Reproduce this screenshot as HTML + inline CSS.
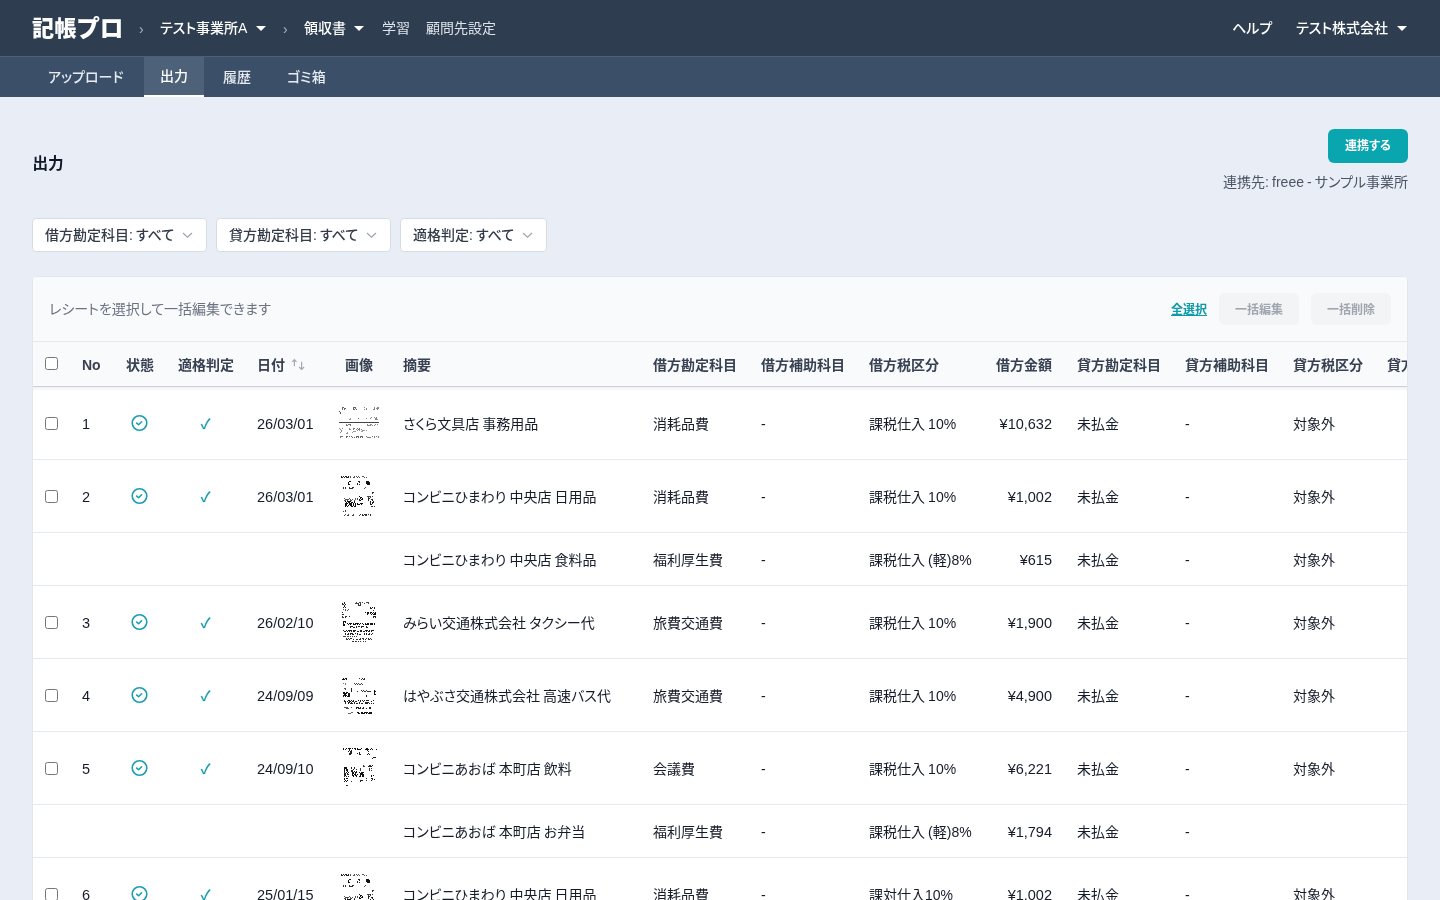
<!DOCTYPE html>
<html lang="ja">
<head>
<meta charset="utf-8">
<title>記帳プロ - 出力</title>
<style>
*{box-sizing:border-box;margin:0;padding:0}
html,body{width:1440px;height:900px;overflow:hidden}
body{font-family:"Liberation Sans","Noto Sans CJK JP",sans-serif;font-feature-settings:"palt" 1;word-spacing:-0.8px;font-size:14px;color:#1f2937;background:#e9eef6;position:relative}
a{color:inherit;text-decoration:none}
#app{position:absolute;left:0;top:0;width:1440px;height:900px;overflow:hidden;will-change:transform}
/* top nav */
.topnav{position:absolute;left:0;top:0;width:1440px;height:56px;background:#2e3e50;color:#fff}
.topnav .it{position:absolute;top:0;height:56px;line-height:57px;font-size:14px;font-weight:500;white-space:nowrap}
.logo{position:absolute;left:32px;top:0;height:56px;line-height:56px;font-size:22px;font-weight:900;letter-spacing:0.4px;font-feature-settings:normal;white-space:nowrap}
.topnav .dim{font-weight:400;color:#dde3ea}
.sep{color:#aab4c0;font-size:14px;font-weight:400!important;line-height:59px!important}
.caret{position:absolute;width:0;height:0;border-left:5px solid transparent;border-right:5px solid transparent;border-top:5px solid #fff;top:26px}
/* sub nav */
.subnav{position:absolute;left:0;top:56px;width:1440px;height:41px;background:#3b5068;border-top:1px solid #4b5f77;color:#e6ebf1}
.subnav .tab{position:absolute;top:0;height:40px;line-height:40px;font-size:14px;font-weight:500;white-space:nowrap}
.subnav .act{left:144px;width:60px;text-align:center;background:#4d6279;color:#fff;font-weight:500;border-bottom:2px solid #fff;line-height:38px}
/* page head */
h1{position:absolute;left:32.5px;top:152px;font-size:15.6px;line-height:24px;font-weight:700;color:#111827}
.btn{position:absolute;left:1328px;top:129px;width:80px;height:34px;border-radius:6px;background:#0aa6b0;color:#fff;font-size:12px;font-weight:700;text-align:center;line-height:35.5px}
.dest{position:absolute;right:32px;top:171px;font-size:14px;line-height:22px;color:#4b5563;white-space:nowrap}
.flt{position:absolute;top:218px;height:34px;border:1px solid #d6dce5;border-radius:4px;background:#fff;font-size:14px;line-height:32px;padding-left:12px;color:#333b49;font-weight:500;white-space:nowrap}
.flt svg{position:absolute;right:13px;top:11px}
/* card */
.card{position:absolute;left:32px;top:276px;width:1376px;height:640px;background:#fff;border:1px solid #e2e7ee;border-radius:4px 4px 0 0;overflow:hidden}
.tool{position:absolute;left:0;top:0;width:1374px;height:65px;background:#f9fafc;border-bottom:1px solid #e5e9ef}
.tool .hint{position:absolute;left:16px;top:21px;line-height:22px;font-size:14px;color:#6b7280}
.tool .all{position:absolute;left:1138px;top:22px;line-height:22px;font-size:12px;font-weight:700;color:#0e9aa7;text-decoration:underline}
.tool .gb{position:absolute;top:16px;height:32px;width:80px;border-radius:6px;background:#f3f4f6;color:#a0a6b0;font-size:12px;font-weight:700;text-align:center;line-height:34px}
table{position:absolute;left:0;top:65px;border-collapse:separate;border-spacing:0;table-layout:fixed;width:1460px}
th,td{padding:0 12px;text-align:left;white-space:nowrap;overflow:visible;font-size:14px;vertical-align:middle}
th{height:45px;background:#f9fafc;font-weight:700;color:#374151;border-bottom:1px solid #cdd0d4}
.hsh{position:absolute;left:0;top:110px;width:1374px;height:4px;background:linear-gradient(rgba(0,0,0,.06),rgba(0,0,0,0));z-index:3}
th .cb{position:relative;top:-1px}
td{height:73px;border-bottom:1px solid #e6e9ee;color:#151b29;background:#fff}
tr.sub td{height:53px}
.r{text-align:right}
td.r,th.r{padding-right:13px}
.hy{position:relative;top:1px}
.c{text-align:center}
.cb{display:block;width:13px;height:13px;border:1px solid #767676;border-radius:2.5px;background:#fff}
.ico{display:block;margin:0 auto;position:relative;left:-1px}
.sort{position:relative;left:4.5px;top:-0.5px;overflow:visible}
.th{display:block;margin-left:-16px}
.n{font-size:14.5px;position:relative;top:1px}
.chk{color:#1a9db0;font-size:14px;font-weight:700}
</style>
</head>
<body>
<div id="app">

<div class="topnav">
  <div class="logo">記帳<span style="font-size:23.6px;letter-spacing:0;margin-left:-0.6px;position:relative;top:1px">プロ</span></div>
  <div class="it sep" style="left:139px">›</div>
  <div class="it" style="left:160px">テスト事業所A</div>
  <div class="caret" style="left:256px"></div>
  <div class="it sep" style="left:283px">›</div>
  <div class="it" style="left:304px">領収書</div>
  <div class="caret" style="left:354px"></div>
  <div class="it dim" style="left:382px">学習</div>
  <div class="it dim" style="left:426px">顧問先設定</div>
  <div class="it" style="left:1232px">ヘルプ</div>
  <div class="it" style="left:1296px">テスト株式会社</div>
  <div class="caret" style="left:1397px"></div>
</div>

<div class="subnav">
  <div class="tab" style="left:48px">アップロード</div>
  <div class="tab act">出力</div>
  <div class="tab" style="left:223px">履歴</div>
  <div class="tab" style="left:287px">ゴミ箱</div>
</div>

<h1>出力</h1>
<div class="btn">連携する</div>
<div class="dest">連携先: freee - サンプル事業所</div>

<div class="flt" style="left:32px;width:175px">借方勘定科目: すべて<svg width="11" height="10" viewBox="0 0 11 10"><path d="M1 3l4.5 4.2L10 3" fill="none" stroke="#9ca3af" stroke-width="1.2"/></svg></div>
<div class="flt" style="left:216px;width:175px">貸方勘定科目: すべて<svg width="11" height="10" viewBox="0 0 11 10"><path d="M1 3l4.5 4.2L10 3" fill="none" stroke="#9ca3af" stroke-width="1.2"/></svg></div>
<div class="flt" style="left:400px;width:147px">適格判定: すべて<svg width="11" height="10" viewBox="0 0 11 10"><path d="M1 3l4.5 4.2L10 3" fill="none" stroke="#9ca3af" stroke-width="1.2"/></svg></div>

<div class="card">
  <div class="tool">
    <div class="hint">レシートを選択して一括編集できます</div>
    <div class="all">全選択</div>
    <div class="gb" style="left:1186px">一括編集</div>
    <div class="gb" style="left:1278px">一括削除</div>
  </div>
  <div class="hsh"></div>
  <table id="tbl">
    <colgroup>
      <col style="width:37px"><col style="width:44px"><col style="width:52px"><col style="width:79px"><col style="width:88px"><col style="width:58px"><col style="width:250px"><col style="width:108px"><col style="width:108px"><col style="width:127px"><col style="width:81px"><col style="width:108px"><col style="width:108px"><col style="width:94px"><col style="width:119px">
    </colgroup>
    <thead>
      <tr><th><span class="cb"></span></th><th><span style="position:relative;top:1px">No</span></th><th class="c">状態</th><th class="c">適格判定</th><th>日付<svg class="sort" width="16" height="12" viewBox="0 0 16 12"><path d="M4.35 8.2V1.6M2.2 3.8L4.35 1.6L6.5 3.8M11.6 3.8V11.4M9.1 9L11.6 11.4L14.1 9" fill="none" stroke="#a3aab5" stroke-width="1.2"/></svg></th><th>画像</th><th>摘要</th><th>借方勘定科目</th><th>借方補助科目</th><th>借方税区分</th><th class="r">借方金額</th><th>貸方勘定科目</th><th>貸方補助科目</th><th>貸方税区分</th><th>貸方金額</th></tr>
    </thead>
    <tbody>
      <tr><td><span class="cb"></span></td><td><span class="n">1</span></td><td><svg class="ico" width="18" height="18" viewBox="0 0 18 18"><circle cx="9.5" cy="9" r="7.3" fill="none" stroke="#1a9db0" stroke-width="1.6"/><path d="M6.7 9.1l1.9 1.7 3-3" fill="none" stroke="#1a9db0" stroke-width="1.5" stroke-linecap="round" stroke-linejoin="round"/></svg></td><td class="c"><span class="chk">✓</span></td><td><span class="n">26/03/01</span></td><td><svg class="th" width="60" height="56" viewBox="0 0 60 56" shape-rendering="crispEdges"><rect x="13" y="12" width="2" height="1" fill="#666"/><rect x="13" y="13" width="1" height="1" fill="#666"/><rect x="15" y="13" width="2" height="1" fill="#666"/><rect x="13" y="14" width="1" height="1" fill="#666"/><rect x="15" y="14" width="1" height="1" fill="#666"/><rect x="24" y="12" width="3" height="1" fill="#666"/><rect x="24" y="13" width="1" height="1" fill="#666"/><rect x="26" y="13" width="1" height="1" fill="#666"/><rect x="24" y="14" width="2" height="1" fill="#666"/><rect x="27" y="14" width="1" height="1" fill="#666"/><rect x="35" y="12" width="1" height="1" fill="#888"/><rect x="37" y="13" width="1" height="1" fill="#888"/><rect x="35" y="14" width="1" height="1" fill="#888"/><rect x="37" y="14" width="1" height="1" fill="#888"/><rect x="45" y="12" width="1" height="1" fill="#888"/><rect x="48" y="12" width="2" height="1" fill="#888"/><rect x="45" y="13" width="1" height="1" fill="#888"/><rect x="47" y="13" width="3" height="1" fill="#888"/><rect x="44" y="14" width="2" height="1" fill="#888"/><rect x="48" y="14" width="1" height="1" fill="#888"/><rect x="10" y="16" width="1" height="1" fill="#555"/><rect x="11" y="17" width="1" height="1" fill="#555"/><rect x="11" y="18" width="1" height="1" fill="#555"/><rect x="21" y="23" width="1" height="1" fill="#999"/><rect x="20" y="24" width="2" height="1" fill="#999"/><rect x="29" y="23" width="1" height="1" fill="#666"/><rect x="37" y="23" width="1" height="1" fill="#999"/><rect x="42" y="22" width="1" height="1" fill="#888"/><rect x="41" y="23" width="1" height="1" fill="#888"/><rect x="45" y="22" width="1" height="1" fill="#888"/><rect x="47" y="22" width="1" height="1" fill="#888"/><rect x="46" y="23" width="2" height="1" fill="#888"/><rect x="46" y="24" width="3" height="1" fill="#888"/><rect x="10" y="27" width="40" height="1" fill="#444"/><rect x="17" y="29" width="1" height="1" fill="#777"/><rect x="19" y="29" width="3" height="1" fill="#777"/><rect x="17" y="30" width="2" height="1" fill="#777"/><rect x="21" y="30" width="1" height="1" fill="#777"/><rect x="38" y="29" width="1" height="1" fill="#888"/><rect x="41" y="29" width="2" height="1" fill="#888"/><rect x="46" y="29" width="1" height="1" fill="#888"/><rect x="48" y="29" width="1" height="1" fill="#888"/><rect x="38" y="30" width="4" height="1" fill="#888"/><rect x="43" y="30" width="1" height="1" fill="#888"/><rect x="45" y="30" width="1" height="1" fill="#888"/><rect x="10" y="33" width="1" height="1" fill="#888"/><rect x="13" y="33" width="1" height="1" fill="#888"/><rect x="11" y="34" width="1" height="1" fill="#888"/><rect x="20" y="33" width="1" height="1" fill="#888"/><rect x="20" y="34" width="2" height="1" fill="#888"/><rect x="24" y="33" width="2" height="1" fill="#777"/><rect x="28" y="33" width="1" height="1" fill="#777"/><rect x="30" y="33" width="1" height="1" fill="#777"/><rect x="24" y="34" width="1" height="1" fill="#777"/><rect x="27" y="34" width="1" height="1" fill="#777"/><rect x="29" y="34" width="2" height="1" fill="#777"/><rect x="32" y="34" width="1" height="1" fill="#777"/><rect x="12" y="35" width="1" height="1" fill="#888"/><rect x="12" y="36" width="1" height="1" fill="#888"/><rect x="28" y="35" width="1" height="1" fill="#999"/><rect x="30" y="35" width="1" height="1" fill="#999"/><rect x="33" y="35" width="3" height="1" fill="#999"/><rect x="37" y="35" width="1" height="1" fill="#999"/><rect x="24" y="36" width="3" height="1" fill="#999"/><rect x="32" y="36" width="2" height="1" fill="#999"/><rect x="11" y="37" width="1" height="1" fill="#888"/><rect x="18" y="37" width="1" height="1" fill="#999"/><rect x="23" y="37" width="1" height="1" fill="#999"/><rect x="17" y="38" width="2" height="1" fill="#999"/><rect x="11" y="41" width="3" height="1" fill="#777"/><rect x="11" y="42" width="1" height="1" fill="#777"/><rect x="17" y="41" width="2" height="1" fill="#666"/><rect x="20" y="41" width="1" height="1" fill="#666"/><rect x="22" y="41" width="1" height="1" fill="#666"/><rect x="27" y="41" width="3" height="1" fill="#666"/><rect x="31" y="41" width="3" height="1" fill="#666"/><rect x="17" y="42" width="1" height="1" fill="#666"/><rect x="23" y="42" width="1" height="1" fill="#666"/><rect x="25" y="42" width="1" height="1" fill="#666"/><rect x="27" y="42" width="1" height="1" fill="#666"/><rect x="29" y="42" width="1" height="1" fill="#666"/><rect x="31" y="42" width="1" height="1" fill="#666"/><rect x="33" y="42" width="1" height="1" fill="#666"/><rect x="37" y="41" width="1" height="1" fill="#777"/><rect x="43" y="41" width="1" height="1" fill="#777"/><rect x="45" y="41" width="1" height="1" fill="#777"/><rect x="47" y="41" width="1" height="1" fill="#777"/><rect x="49" y="41" width="1" height="1" fill="#777"/><rect x="38" y="42" width="4" height="1" fill="#777"/><rect x="45" y="42" width="1" height="1" fill="#777"/><rect x="49" y="42" width="1" height="1" fill="#777"/></svg></td><td>さくら文具店 事務用品</td><td>消耗品費</td><td><span class="hy">-</span></td><td>課税仕入 10%</td><td class="r"><span class="n">¥10,632</span></td><td>未払金</td><td><span class="hy">-</span></td><td>対象外</td><td></td></tr>
      <tr><td><span class="cb"></span></td><td><span class="n">2</span></td><td><svg class="ico" width="18" height="18" viewBox="0 0 18 18"><circle cx="9.5" cy="9" r="7.3" fill="none" stroke="#1a9db0" stroke-width="1.6"/><path d="M6.7 9.1l1.9 1.7 3-3" fill="none" stroke="#1a9db0" stroke-width="1.5" stroke-linecap="round" stroke-linejoin="round"/></svg></td><td class="c"><span class="chk">✓</span></td><td><span class="n">26/03/01</span></td><td><svg class="th" width="60" height="56" viewBox="0 0 60 56" shape-rendering="crispEdges"><rect x="12" y="8" width="1" height="1" fill="#222"/><rect x="14" y="8" width="1" height="1" fill="#222"/><rect x="16" y="8" width="2" height="1" fill="#222"/><rect x="19" y="8" width="1" height="1" fill="#222"/><rect x="12" y="9" width="2" height="1" fill="#222"/><rect x="15" y="9" width="1" height="1" fill="#222"/><rect x="17" y="9" width="3" height="1" fill="#222"/><rect x="21" y="8" width="1" height="1" fill="#555"/><rect x="25" y="8" width="1" height="1" fill="#555"/><rect x="27" y="8" width="1" height="1" fill="#555"/><rect x="29" y="8" width="1" height="1" fill="#555"/><rect x="33" y="8" width="2" height="1" fill="#555"/><rect x="21" y="9" width="1" height="1" fill="#555"/><rect x="24" y="9" width="2" height="1" fill="#555"/><rect x="28" y="9" width="1" height="1" fill="#555"/><rect x="30" y="9" width="1" height="1" fill="#555"/><rect x="35" y="9" width="1" height="1" fill="#555"/><rect x="37" y="9" width="1" height="1" fill="#555"/><rect x="20" y="13" width="2" height="1" fill="#111"/><rect x="19" y="14" width="1" height="1" fill="#111"/><rect x="19" y="15" width="1" height="1" fill="#111"/><rect x="19" y="16" width="2" height="1" fill="#111"/><rect x="29" y="13" width="2" height="1" fill="#222"/><rect x="30" y="14" width="1" height="1" fill="#222"/><rect x="28" y="15" width="1" height="1" fill="#222"/><rect x="28" y="16" width="1" height="1" fill="#222"/><rect x="30" y="16" width="1" height="1" fill="#222"/><rect x="37" y="13" width="3" height="1" fill="#111"/><rect x="37" y="14" width="4" height="1" fill="#111"/><rect x="37" y="15" width="4" height="1" fill="#111"/><rect x="38" y="16" width="3" height="1" fill="#111"/><rect x="14" y="19" width="1" height="1" fill="#333"/><rect x="16" y="19" width="1" height="1" fill="#333"/><rect x="20" y="19" width="1" height="1" fill="#333"/><rect x="23" y="19" width="2" height="1" fill="#333"/><rect x="14" y="20" width="1" height="1" fill="#333"/><rect x="16" y="20" width="1" height="1" fill="#333"/><rect x="20" y="20" width="4" height="1" fill="#333"/><rect x="36" y="19" width="1" height="1" fill="#555"/><rect x="35" y="20" width="1" height="1" fill="#555"/><rect x="43" y="24" width="2" height="1" fill="#333"/><rect x="43" y="25" width="1" height="1" fill="#333"/><rect x="30" y="28" width="1" height="1" fill="#111"/><rect x="31" y="29" width="2" height="1" fill="#111"/><rect x="38" y="28" width="4" height="1" fill="#444"/><rect x="43" y="28" width="1" height="1" fill="#444"/><rect x="39" y="29" width="1" height="1" fill="#444"/><rect x="41" y="29" width="1" height="1" fill="#444"/><rect x="15" y="30" width="1" height="1" fill="#555"/><rect x="20" y="30" width="1" height="1" fill="#555"/><rect x="26" y="30" width="1" height="1" fill="#555"/><rect x="28" y="30" width="1" height="1" fill="#555"/><rect x="16" y="31" width="4" height="1" fill="#555"/><rect x="21" y="31" width="1" height="1" fill="#555"/><rect x="23" y="31" width="1" height="1" fill="#555"/><rect x="26" y="31" width="1" height="1" fill="#555"/><rect x="28" y="31" width="1" height="1" fill="#555"/><rect x="15" y="32" width="2" height="1" fill="#555"/><rect x="18" y="32" width="1" height="1" fill="#555"/><rect x="21" y="32" width="2" height="1" fill="#555"/><rect x="25" y="32" width="1" height="1" fill="#555"/><rect x="31" y="30" width="1" height="1" fill="#111"/><rect x="33" y="30" width="1" height="1" fill="#111"/><rect x="30" y="31" width="1" height="1" fill="#111"/><rect x="32" y="31" width="2" height="1" fill="#111"/><rect x="30" y="32" width="2" height="1" fill="#111"/><rect x="39" y="30" width="2" height="1" fill="#222"/><rect x="39" y="31" width="1" height="1" fill="#222"/><rect x="42" y="31" width="2" height="1" fill="#222"/><rect x="39" y="32" width="1" height="1" fill="#222"/><rect x="43" y="32" width="1" height="1" fill="#222"/><rect x="16" y="33" width="1" height="1" fill="#111"/><rect x="18" y="33" width="4" height="1" fill="#111"/><rect x="25" y="33" width="1" height="1" fill="#111"/><rect x="17" y="34" width="1" height="1" fill="#111"/><rect x="19" y="34" width="2" height="1" fill="#111"/><rect x="22" y="34" width="2" height="1" fill="#111"/><rect x="25" y="34" width="1" height="1" fill="#111"/><rect x="16" y="35" width="3" height="1" fill="#111"/><rect x="20" y="35" width="3" height="1" fill="#111"/><rect x="24" y="35" width="1" height="1" fill="#111"/><rect x="26" y="35" width="1" height="1" fill="#111"/><rect x="16" y="36" width="2" height="1" fill="#111"/><rect x="20" y="36" width="3" height="1" fill="#111"/><rect x="24" y="36" width="1" height="1" fill="#111"/><rect x="26" y="36" width="1" height="1" fill="#111"/><rect x="16" y="37" width="2" height="1" fill="#111"/><rect x="19" y="37" width="1" height="1" fill="#111"/><rect x="21" y="37" width="2" height="1" fill="#111"/><rect x="24" y="37" width="1" height="1" fill="#111"/><rect x="26" y="37" width="1" height="1" fill="#111"/><rect x="16" y="38" width="1" height="1" fill="#111"/><rect x="18" y="38" width="1" height="1" fill="#111"/><rect x="22" y="38" width="2" height="1" fill="#111"/><rect x="25" y="38" width="2" height="1" fill="#111"/><rect x="28" y="35" width="1" height="1" fill="#111"/><rect x="31" y="35" width="3" height="1" fill="#111"/><rect x="28" y="36" width="3" height="1" fill="#111"/><rect x="32" y="36" width="1" height="1" fill="#111"/><rect x="41" y="33" width="1" height="1" fill="#222"/><rect x="44" y="33" width="1" height="1" fill="#222"/><rect x="41" y="34" width="1" height="1" fill="#222"/><rect x="43" y="34" width="2" height="1" fill="#222"/><rect x="41" y="35" width="1" height="1" fill="#222"/><rect x="43" y="35" width="1" height="1" fill="#222"/><rect x="41" y="36" width="2" height="1" fill="#222"/><rect x="42" y="38" width="2" height="1" fill="#333"/><rect x="45" y="38" width="1" height="1" fill="#333"/><rect x="16" y="42" width="1" height="1" fill="#444"/><rect x="14" y="43" width="1" height="1" fill="#444"/><rect x="16" y="43" width="1" height="1" fill="#444"/><rect x="16" y="46" width="1" height="1" fill="#444"/><rect x="19" y="46" width="1" height="1" fill="#444"/><rect x="15" y="47" width="1" height="1" fill="#444"/><rect x="18" y="47" width="2" height="1" fill="#444"/><rect x="24" y="46" width="1" height="1" fill="#444"/><rect x="23" y="47" width="2" height="1" fill="#444"/><rect x="31" y="46" width="1" height="1" fill="#333"/><rect x="33" y="46" width="1" height="1" fill="#333"/><rect x="35" y="46" width="3" height="1" fill="#333"/><rect x="39" y="46" width="1" height="1" fill="#333"/><rect x="41" y="46" width="1" height="1" fill="#333"/><rect x="30" y="47" width="1" height="1" fill="#333"/><rect x="33" y="47" width="2" height="1" fill="#333"/><rect x="36" y="47" width="2" height="1" fill="#333"/><rect x="41" y="47" width="1" height="1" fill="#333"/></svg></td><td>コンビニひまわり 中央店 日用品</td><td>消耗品費</td><td><span class="hy">-</span></td><td>課税仕入 10%</td><td class="r"><span class="n">¥1,002</span></td><td>未払金</td><td><span class="hy">-</span></td><td>対象外</td><td></td></tr>
      <tr class="sub"><td></td><td></td><td></td><td></td><td></td><td></td><td>コンビニひまわり 中央店 食料品</td><td>福利厚生費</td><td><span class="hy">-</span></td><td>課税仕入 (軽)8%</td><td class="r"><span class="n">¥615</span></td><td>未払金</td><td><span class="hy">-</span></td><td>対象外</td><td></td></tr>
      <tr><td><span class="cb"></span></td><td><span class="n">3</span></td><td><svg class="ico" width="18" height="18" viewBox="0 0 18 18"><circle cx="9.5" cy="9" r="7.3" fill="none" stroke="#1a9db0" stroke-width="1.6"/><path d="M6.7 9.1l1.9 1.7 3-3" fill="none" stroke="#1a9db0" stroke-width="1.5" stroke-linecap="round" stroke-linejoin="round"/></svg></td><td class="c"><span class="chk">✓</span></td><td><span class="n">26/02/10</span></td><td><svg class="th" width="60" height="56" viewBox="0 0 60 56" shape-rendering="crispEdges"><rect x="27" y="8" width="1" height="1" fill="#444"/><rect x="30" y="8" width="2" height="1" fill="#444"/><rect x="33" y="8" width="1" height="1" fill="#444"/><rect x="37" y="8" width="3" height="1" fill="#444"/><rect x="26" y="9" width="4" height="1" fill="#444"/><rect x="31" y="9" width="1" height="1" fill="#444"/><rect x="35" y="9" width="1" height="1" fill="#444"/><rect x="39" y="9" width="1" height="1" fill="#444"/><rect x="29" y="10" width="1" height="1" fill="#333"/><rect x="31" y="10" width="1" height="1" fill="#333"/><rect x="29" y="11" width="3" height="1" fill="#333"/><rect x="15" y="8" width="1" height="1" fill="#222"/><rect x="13" y="9" width="1" height="1" fill="#222"/><rect x="15" y="9" width="1" height="1" fill="#222"/><rect x="13" y="10" width="2" height="1" fill="#222"/><rect x="16" y="10" width="1" height="1" fill="#222"/><rect x="15" y="11" width="1" height="1" fill="#222"/><rect x="15" y="12" width="1" height="1" fill="#222"/><rect x="14" y="13" width="1" height="1" fill="#222"/><rect x="16" y="13" width="1" height="1" fill="#222"/><rect x="41" y="13" width="1" height="1" fill="#222"/><rect x="43" y="13" width="1" height="1" fill="#222"/><rect x="45" y="13" width="1" height="1" fill="#222"/><rect x="41" y="14" width="2" height="1" fill="#222"/><rect x="45" y="14" width="1" height="1" fill="#222"/><rect x="44" y="16" width="1" height="1" fill="#444"/><rect x="14" y="15" width="1" height="1" fill="#555"/><rect x="16" y="15" width="1" height="1" fill="#555"/><rect x="19" y="15" width="1" height="1" fill="#555"/><rect x="16" y="16" width="1" height="1" fill="#555"/><rect x="18" y="16" width="1" height="1" fill="#555"/><rect x="13" y="18" width="1" height="1" fill="#222"/><rect x="13" y="20" width="2" height="1" fill="#222"/><rect x="36" y="18" width="1" height="1" fill="#111"/><rect x="38" y="18" width="2" height="1" fill="#111"/><rect x="41" y="18" width="2" height="1" fill="#111"/><rect x="44" y="18" width="1" height="1" fill="#111"/><rect x="46" y="18" width="1" height="1" fill="#111"/><rect x="38" y="19" width="2" height="1" fill="#111"/><rect x="41" y="19" width="1" height="1" fill="#111"/><rect x="43" y="19" width="1" height="1" fill="#111"/><rect x="45" y="19" width="2" height="1" fill="#111"/><rect x="38" y="20" width="1" height="1" fill="#111"/><rect x="42" y="20" width="1" height="1" fill="#111"/><rect x="44" y="20" width="3" height="1" fill="#111"/><rect x="13" y="22" width="1" height="1" fill="#333"/><rect x="16" y="22" width="2" height="1" fill="#333"/><rect x="20" y="22" width="1" height="1" fill="#333"/><rect x="13" y="23" width="2" height="1" fill="#333"/><rect x="16" y="23" width="1" height="1" fill="#333"/><rect x="44" y="22" width="3" height="1" fill="#222"/><rect x="44" y="23" width="1" height="1" fill="#222"/><rect x="46" y="23" width="1" height="1" fill="#222"/><rect x="14" y="27" width="3" height="1" fill="#111"/><rect x="14" y="28" width="1" height="1" fill="#111"/><rect x="16" y="28" width="1" height="1" fill="#111"/><rect x="14" y="29" width="1" height="1" fill="#111"/><rect x="14" y="30" width="2" height="1" fill="#111"/><rect x="14" y="31" width="2" height="1" fill="#111"/><rect x="18" y="29" width="1" height="1" fill="#111"/><rect x="20" y="29" width="3" height="1" fill="#111"/><rect x="24" y="29" width="1" height="1" fill="#111"/><rect x="26" y="29" width="4" height="1" fill="#111"/><rect x="31" y="29" width="1" height="1" fill="#111"/><rect x="33" y="29" width="1" height="1" fill="#111"/><rect x="36" y="29" width="1" height="1" fill="#111"/><rect x="38" y="29" width="2" height="1" fill="#111"/><rect x="41" y="29" width="3" height="1" fill="#111"/><rect x="45" y="29" width="1" height="1" fill="#111"/><rect x="19" y="30" width="1" height="1" fill="#111"/><rect x="21" y="30" width="1" height="1" fill="#111"/><rect x="24" y="30" width="3" height="1" fill="#111"/><rect x="28" y="30" width="1" height="1" fill="#111"/><rect x="30" y="30" width="1" height="1" fill="#111"/><rect x="34" y="30" width="1" height="1" fill="#111"/><rect x="36" y="30" width="4" height="1" fill="#111"/><rect x="41" y="30" width="3" height="1" fill="#111"/><rect x="45" y="30" width="1" height="1" fill="#111"/><rect x="21" y="32" width="3" height="1" fill="#222"/><rect x="27" y="32" width="1" height="1" fill="#222"/><rect x="29" y="32" width="2" height="1" fill="#222"/><rect x="32" y="32" width="3" height="1" fill="#222"/><rect x="37" y="32" width="1" height="1" fill="#222"/><rect x="21" y="33" width="1" height="1" fill="#222"/><rect x="24" y="33" width="2" height="1" fill="#222"/><rect x="27" y="33" width="1" height="1" fill="#222"/><rect x="32" y="33" width="1" height="1" fill="#222"/><rect x="37" y="33" width="2" height="1" fill="#222"/><rect x="14" y="36" width="1" height="1" fill="#222"/><rect x="17" y="36" width="1" height="1" fill="#222"/><rect x="19" y="36" width="4" height="1" fill="#222"/><rect x="24" y="36" width="3" height="1" fill="#222"/><rect x="31" y="36" width="2" height="1" fill="#222"/><rect x="36" y="36" width="3" height="1" fill="#222"/><rect x="40" y="36" width="1" height="1" fill="#222"/><rect x="42" y="36" width="3" height="1" fill="#222"/><rect x="15" y="37" width="2" height="1" fill="#222"/><rect x="18" y="37" width="1" height="1" fill="#222"/><rect x="20" y="37" width="1" height="1" fill="#222"/><rect x="22" y="37" width="1" height="1" fill="#222"/><rect x="24" y="37" width="2" height="1" fill="#222"/><rect x="28" y="37" width="2" height="1" fill="#222"/><rect x="31" y="37" width="2" height="1" fill="#222"/><rect x="34" y="37" width="2" height="1" fill="#222"/><rect x="37" y="37" width="1" height="1" fill="#222"/><rect x="39" y="37" width="2" height="1" fill="#222"/><rect x="42" y="37" width="1" height="1" fill="#222"/><rect x="16" y="39" width="1" height="1" fill="#222"/><rect x="19" y="39" width="1" height="1" fill="#222"/><rect x="21" y="39" width="3" height="1" fill="#222"/><rect x="26" y="39" width="1" height="1" fill="#222"/><rect x="28" y="39" width="1" height="1" fill="#222"/><rect x="35" y="39" width="1" height="1" fill="#222"/><rect x="37" y="39" width="1" height="1" fill="#222"/><rect x="40" y="39" width="1" height="1" fill="#222"/><rect x="43" y="39" width="1" height="1" fill="#222"/><rect x="16" y="40" width="1" height="1" fill="#222"/><rect x="18" y="40" width="2" height="1" fill="#222"/><rect x="21" y="40" width="1" height="1" fill="#222"/><rect x="23" y="40" width="2" height="1" fill="#222"/><rect x="28" y="40" width="1" height="1" fill="#222"/><rect x="30" y="40" width="2" height="1" fill="#222"/><rect x="35" y="40" width="1" height="1" fill="#222"/><rect x="37" y="40" width="1" height="1" fill="#222"/><rect x="39" y="40" width="2" height="1" fill="#222"/><rect x="42" y="40" width="1" height="1" fill="#222"/><rect x="14" y="42" width="3" height="1" fill="#444"/><rect x="18" y="42" width="2" height="1" fill="#444"/><rect x="21" y="42" width="1" height="1" fill="#444"/><rect x="23" y="42" width="1" height="1" fill="#444"/><rect x="25" y="42" width="1" height="1" fill="#444"/><rect x="27" y="42" width="1" height="1" fill="#444"/><rect x="17" y="44" width="1" height="1" fill="#333"/><rect x="19" y="44" width="1" height="1" fill="#333"/><rect x="21" y="44" width="2" height="1" fill="#333"/><rect x="31" y="44" width="1" height="1" fill="#333"/><rect x="33" y="44" width="2" height="1" fill="#333"/><rect x="37" y="44" width="1" height="1" fill="#333"/><rect x="39" y="44" width="1" height="1" fill="#333"/><rect x="41" y="44" width="1" height="1" fill="#333"/><rect x="17" y="45" width="2" height="1" fill="#333"/><rect x="20" y="45" width="1" height="1" fill="#333"/><rect x="24" y="45" width="1" height="1" fill="#333"/><rect x="27" y="45" width="2" height="1" fill="#333"/><rect x="30" y="45" width="2" height="1" fill="#333"/><rect x="34" y="45" width="1" height="1" fill="#333"/><rect x="36" y="45" width="1" height="1" fill="#333"/><rect x="39" y="45" width="2" height="1" fill="#333"/><rect x="42" y="45" width="1" height="1" fill="#333"/><rect x="23" y="47" width="2" height="1" fill="#333"/><rect x="26" y="47" width="2" height="1" fill="#333"/><rect x="29" y="47" width="1" height="1" fill="#333"/><rect x="31" y="47" width="1" height="1" fill="#333"/><rect x="34" y="47" width="1" height="1" fill="#333"/><rect x="36" y="47" width="1" height="1" fill="#333"/></svg></td><td>みらい交通株式会社 タクシー代</td><td>旅費交通費</td><td><span class="hy">-</span></td><td>課税仕入 10%</td><td class="r"><span class="n">¥1,900</span></td><td>未払金</td><td><span class="hy">-</span></td><td>対象外</td><td></td></tr>
      <tr><td><span class="cb"></span></td><td><span class="n">4</span></td><td><svg class="ico" width="18" height="18" viewBox="0 0 18 18"><circle cx="9.5" cy="9" r="7.3" fill="none" stroke="#1a9db0" stroke-width="1.6"/><path d="M6.7 9.1l1.9 1.7 3-3" fill="none" stroke="#1a9db0" stroke-width="1.5" stroke-linecap="round" stroke-linejoin="round"/></svg></td><td class="c"><span class="chk">✓</span></td><td><span class="n">24/09/09</span></td><td><svg class="th" width="60" height="56" viewBox="0 0 60 56" shape-rendering="crispEdges"><rect x="14" y="11" width="1" height="1" fill="#111"/><rect x="16" y="11" width="2" height="1" fill="#111"/><rect x="13" y="12" width="3" height="1" fill="#111"/><rect x="17" y="12" width="1" height="1" fill="#111"/><rect x="30" y="11" width="1" height="1" fill="#333"/><rect x="33" y="11" width="1" height="1" fill="#333"/><rect x="35" y="11" width="1" height="1" fill="#333"/><rect x="32" y="12" width="1" height="1" fill="#333"/><rect x="34" y="12" width="2" height="1" fill="#333"/><rect x="14" y="16" width="1" height="1" fill="#777"/><rect x="16" y="16" width="1" height="1" fill="#777"/><rect x="16" y="17" width="1" height="1" fill="#777"/><rect x="25" y="16" width="1" height="1" fill="#444"/><rect x="27" y="16" width="1" height="1" fill="#444"/><rect x="29" y="16" width="1" height="1" fill="#444"/><rect x="32" y="16" width="1" height="1" fill="#444"/><rect x="26" y="17" width="1" height="1" fill="#444"/><rect x="28" y="17" width="1" height="1" fill="#444"/><rect x="30" y="17" width="2" height="1" fill="#444"/><rect x="33" y="17" width="1" height="1" fill="#444"/><rect x="15" y="21" width="2" height="1" fill="#555"/><rect x="16" y="22" width="1" height="1" fill="#555"/><rect x="22" y="21" width="1" height="1" fill="#222"/><rect x="22" y="22" width="1" height="1" fill="#222"/><rect x="22" y="23" width="1" height="1" fill="#222"/><rect x="22" y="24" width="1" height="1" fill="#222"/><rect x="32" y="23" width="1" height="1" fill="#333"/><rect x="34" y="23" width="1" height="1" fill="#333"/><rect x="37" y="23" width="1" height="1" fill="#333"/><rect x="28" y="24" width="1" height="1" fill="#333"/><rect x="33" y="24" width="1" height="1" fill="#333"/><rect x="35" y="24" width="2" height="1" fill="#333"/><rect x="38" y="24" width="4" height="1" fill="#333"/><rect x="45" y="23" width="1" height="1" fill="#111"/><rect x="45" y="24" width="2" height="1" fill="#111"/><rect x="45" y="25" width="1" height="1" fill="#111"/><rect x="45" y="26" width="1" height="1" fill="#111"/><rect x="45" y="27" width="2" height="1" fill="#111"/><rect x="14" y="25" width="2" height="1" fill="#111"/><rect x="17" y="25" width="2" height="1" fill="#111"/><rect x="14" y="26" width="4" height="1" fill="#111"/><rect x="19" y="26" width="2" height="1" fill="#111"/><rect x="15" y="27" width="2" height="1" fill="#111"/><rect x="19" y="27" width="2" height="1" fill="#111"/><rect x="14" y="28" width="4" height="1" fill="#111"/><rect x="19" y="28" width="2" height="1" fill="#111"/><rect x="14" y="29" width="1" height="1" fill="#111"/><rect x="16" y="29" width="1" height="1" fill="#111"/><rect x="18" y="29" width="3" height="1" fill="#111"/><rect x="37" y="28" width="1" height="1" fill="#222"/><rect x="37" y="29" width="1" height="1" fill="#222"/><rect x="15" y="33" width="1" height="1" fill="#222"/><rect x="19" y="33" width="2" height="1" fill="#222"/><rect x="22" y="33" width="1" height="1" fill="#222"/><rect x="24" y="33" width="1" height="1" fill="#222"/><rect x="29" y="33" width="1" height="1" fill="#222"/><rect x="31" y="33" width="1" height="1" fill="#222"/><rect x="33" y="33" width="1" height="1" fill="#222"/><rect x="35" y="33" width="1" height="1" fill="#222"/><rect x="37" y="33" width="3" height="1" fill="#222"/><rect x="44" y="33" width="1" height="1" fill="#222"/><rect x="15" y="34" width="2" height="1" fill="#222"/><rect x="18" y="34" width="1" height="1" fill="#222"/><rect x="20" y="34" width="2" height="1" fill="#222"/><rect x="23" y="34" width="2" height="1" fill="#222"/><rect x="26" y="34" width="2" height="1" fill="#222"/><rect x="31" y="34" width="1" height="1" fill="#222"/><rect x="34" y="34" width="1" height="1" fill="#222"/><rect x="42" y="34" width="1" height="1" fill="#222"/><rect x="16" y="35" width="1" height="1" fill="#222"/><rect x="19" y="35" width="2" height="1" fill="#222"/><rect x="22" y="35" width="1" height="1" fill="#222"/><rect x="25" y="35" width="1" height="1" fill="#222"/><rect x="30" y="35" width="1" height="1" fill="#222"/><rect x="36" y="35" width="4" height="1" fill="#222"/><rect x="16" y="36" width="1" height="1" fill="#222"/><rect x="19" y="36" width="1" height="1" fill="#222"/><rect x="21" y="36" width="3" height="1" fill="#222"/><rect x="25" y="36" width="1" height="1" fill="#222"/><rect x="27" y="36" width="2" height="1" fill="#222"/><rect x="30" y="36" width="1" height="1" fill="#222"/><rect x="32" y="36" width="2" height="1" fill="#222"/><rect x="36" y="36" width="3" height="1" fill="#222"/><rect x="40" y="36" width="1" height="1" fill="#222"/><rect x="42" y="36" width="1" height="1" fill="#222"/><rect x="44" y="36" width="1" height="1" fill="#222"/><rect x="15" y="40" width="4" height="1" fill="#555"/><rect x="22" y="40" width="1" height="1" fill="#555"/><rect x="17" y="41" width="3" height="1" fill="#555"/><rect x="27" y="40" width="3" height="1" fill="#222"/><rect x="31" y="40" width="1" height="1" fill="#222"/><rect x="34" y="40" width="1" height="1" fill="#222"/><rect x="40" y="40" width="2" height="1" fill="#222"/><rect x="27" y="41" width="1" height="1" fill="#222"/><rect x="29" y="41" width="3" height="1" fill="#222"/><rect x="33" y="41" width="2" height="1" fill="#222"/><rect x="37" y="41" width="1" height="1" fill="#222"/><rect x="40" y="41" width="2" height="1" fill="#222"/><rect x="22" y="45" width="2" height="1" fill="#666"/><rect x="19" y="46" width="3" height="1" fill="#666"/><rect x="28" y="45" width="2" height="1" fill="#111"/><rect x="32" y="45" width="2" height="1" fill="#111"/><rect x="35" y="45" width="4" height="1" fill="#111"/><rect x="40" y="45" width="3" height="1" fill="#111"/><rect x="29" y="46" width="2" height="1" fill="#111"/><rect x="32" y="46" width="4" height="1" fill="#111"/><rect x="37" y="46" width="1" height="1" fill="#111"/><rect x="39" y="46" width="4" height="1" fill="#111"/></svg></td><td>はやぶさ交通株式会社 高速バス代</td><td>旅費交通費</td><td><span class="hy">-</span></td><td>課税仕入 10%</td><td class="r"><span class="n">¥4,900</span></td><td>未払金</td><td><span class="hy">-</span></td><td>対象外</td><td></td></tr>
      <tr><td><span class="cb"></span></td><td><span class="n">5</span></td><td><svg class="ico" width="18" height="18" viewBox="0 0 18 18"><circle cx="9.5" cy="9" r="7.3" fill="none" stroke="#1a9db0" stroke-width="1.6"/><path d="M6.7 9.1l1.9 1.7 3-3" fill="none" stroke="#1a9db0" stroke-width="1.5" stroke-linecap="round" stroke-linejoin="round"/></svg></td><td class="c"><span class="chk">✓</span></td><td><span class="n">24/09/10</span></td><td><svg class="th" width="60" height="56" viewBox="0 0 60 56" shape-rendering="crispEdges"><rect x="14" y="8" width="1" height="1" fill="#111"/><rect x="17" y="8" width="1" height="1" fill="#111"/><rect x="19" y="8" width="3" height="1" fill="#111"/><rect x="23" y="8" width="1" height="1" fill="#111"/><rect x="25" y="8" width="2" height="1" fill="#111"/><rect x="28" y="8" width="1" height="1" fill="#111"/><rect x="32" y="8" width="1" height="1" fill="#111"/><rect x="37" y="8" width="2" height="1" fill="#111"/><rect x="42" y="8" width="1" height="1" fill="#111"/><rect x="14" y="9" width="1" height="1" fill="#111"/><rect x="16" y="9" width="1" height="1" fill="#111"/><rect x="20" y="9" width="1" height="1" fill="#111"/><rect x="26" y="9" width="1" height="1" fill="#111"/><rect x="28" y="9" width="4" height="1" fill="#111"/><rect x="36" y="9" width="4" height="1" fill="#111"/><rect x="41" y="9" width="1" height="1" fill="#111"/><rect x="43" y="9" width="1" height="1" fill="#111"/><rect x="47" y="9" width="1" height="1" fill="#111"/><rect x="20" y="10" width="1" height="1" fill="#222"/><rect x="22" y="10" width="1" height="1" fill="#222"/><rect x="19" y="11" width="1" height="1" fill="#222"/><rect x="21" y="11" width="2" height="1" fill="#222"/><rect x="21" y="12" width="2" height="1" fill="#222"/><rect x="20" y="13" width="3" height="1" fill="#222"/><rect x="20" y="14" width="2" height="1" fill="#222"/><rect x="30" y="12" width="1" height="1" fill="#222"/><rect x="28" y="13" width="1" height="1" fill="#222"/><rect x="30" y="13" width="1" height="1" fill="#222"/><rect x="30" y="14" width="2" height="1" fill="#222"/><rect x="38" y="10" width="1" height="1" fill="#222"/><rect x="39" y="11" width="1" height="1" fill="#222"/><rect x="39" y="13" width="1" height="1" fill="#222"/><rect x="38" y="14" width="1" height="1" fill="#222"/><rect x="40" y="14" width="1" height="1" fill="#222"/><rect x="44" y="17" width="3" height="1" fill="#222"/><rect x="43" y="18" width="1" height="1" fill="#222"/><rect x="34" y="25" width="1" height="1" fill="#333"/><rect x="34" y="26" width="2" height="1" fill="#333"/><rect x="40" y="25" width="2" height="1" fill="#222"/><rect x="43" y="25" width="1" height="1" fill="#222"/><rect x="39" y="26" width="4" height="1" fill="#222"/><rect x="15" y="27" width="3" height="1" fill="#111"/><rect x="15" y="28" width="3" height="1" fill="#111"/><rect x="15" y="29" width="1" height="1" fill="#111"/><rect x="17" y="29" width="2" height="1" fill="#111"/><rect x="15" y="30" width="1" height="1" fill="#111"/><rect x="17" y="30" width="2" height="1" fill="#111"/><rect x="15" y="31" width="1" height="1" fill="#111"/><rect x="18" y="31" width="1" height="1" fill="#111"/><rect x="22" y="27" width="1" height="1" fill="#222"/><rect x="25" y="27" width="1" height="1" fill="#222"/><rect x="22" y="28" width="1" height="1" fill="#222"/><rect x="25" y="28" width="1" height="1" fill="#222"/><rect x="24" y="29" width="1" height="1" fill="#222"/><rect x="27" y="29" width="1" height="1" fill="#222"/><rect x="22" y="30" width="2" height="1" fill="#222"/><rect x="22" y="31" width="2" height="1" fill="#222"/><rect x="25" y="31" width="1" height="1" fill="#222"/><rect x="27" y="31" width="1" height="1" fill="#222"/><rect x="31" y="28" width="1" height="1" fill="#444"/><rect x="31" y="29" width="1" height="1" fill="#444"/><rect x="31" y="30" width="1" height="1" fill="#444"/><rect x="40" y="28" width="1" height="1" fill="#333"/><rect x="42" y="28" width="1" height="1" fill="#333"/><rect x="40" y="29" width="1" height="1" fill="#333"/><rect x="40" y="30" width="1" height="1" fill="#333"/><rect x="42" y="30" width="1" height="1" fill="#333"/><rect x="15" y="32" width="1" height="1" fill="#222"/><rect x="17" y="32" width="1" height="1" fill="#222"/><rect x="19" y="32" width="1" height="1" fill="#222"/><rect x="15" y="33" width="2" height="1" fill="#222"/><rect x="18" y="33" width="1" height="1" fill="#222"/><rect x="15" y="34" width="2" height="1" fill="#222"/><rect x="18" y="34" width="2" height="1" fill="#222"/><rect x="15" y="35" width="2" height="1" fill="#222"/><rect x="15" y="36" width="1" height="1" fill="#222"/><rect x="17" y="36" width="1" height="1" fill="#222"/><rect x="19" y="36" width="1" height="1" fill="#222"/><rect x="23" y="32" width="2" height="1" fill="#111"/><rect x="26" y="32" width="2" height="1" fill="#111"/><rect x="23" y="33" width="2" height="1" fill="#111"/><rect x="26" y="33" width="1" height="1" fill="#111"/><rect x="23" y="34" width="1" height="1" fill="#111"/><rect x="25" y="34" width="2" height="1" fill="#111"/><rect x="28" y="34" width="1" height="1" fill="#111"/><rect x="23" y="35" width="2" height="1" fill="#111"/><rect x="26" y="35" width="2" height="1" fill="#111"/><rect x="24" y="36" width="1" height="1" fill="#111"/><rect x="27" y="36" width="1" height="1" fill="#111"/><rect x="30" y="32" width="1" height="1" fill="#111"/><rect x="32" y="32" width="3" height="1" fill="#111"/><rect x="31" y="33" width="3" height="1" fill="#111"/><rect x="31" y="34" width="4" height="1" fill="#111"/><rect x="31" y="35" width="1" height="1" fill="#111"/><rect x="33" y="35" width="2" height="1" fill="#111"/><rect x="30" y="36" width="2" height="1" fill="#111"/><rect x="33" y="36" width="2" height="1" fill="#111"/><rect x="42" y="35" width="1" height="1" fill="#111"/><rect x="44" y="35" width="1" height="1" fill="#111"/><rect x="42" y="36" width="1" height="1" fill="#111"/><rect x="15" y="38" width="1" height="1" fill="#111"/><rect x="17" y="38" width="2" height="1" fill="#111"/><rect x="15" y="39" width="1" height="1" fill="#111"/><rect x="16" y="40" width="1" height="1" fill="#111"/><rect x="18" y="40" width="1" height="1" fill="#111"/><rect x="15" y="41" width="1" height="1" fill="#111"/><rect x="17" y="41" width="1" height="1" fill="#111"/><rect x="22" y="41" width="1" height="1" fill="#333"/><rect x="31" y="40" width="3" height="1" fill="#222"/><rect x="31" y="41" width="1" height="1" fill="#222"/><rect x="37" y="38" width="1" height="1" fill="#333"/><rect x="37" y="40" width="1" height="1" fill="#333"/><rect x="42" y="38" width="2" height="1" fill="#222"/><rect x="43" y="39" width="1" height="1" fill="#222"/><rect x="45" y="39" width="1" height="1" fill="#222"/><rect x="42" y="40" width="1" height="1" fill="#222"/><rect x="17" y="45" width="2" height="1" fill="#333"/></svg></td><td>コンビニあおば 本町店 飲料</td><td>会議費</td><td><span class="hy">-</span></td><td>課税仕入 10%</td><td class="r"><span class="n">¥6,221</span></td><td>未払金</td><td><span class="hy">-</span></td><td>対象外</td><td></td></tr>
      <tr class="sub"><td></td><td></td><td></td><td></td><td></td><td></td><td>コンビニあおば 本町店 お弁当</td><td>福利厚生費</td><td><span class="hy">-</span></td><td>課税仕入 (軽)8%</td><td class="r"><span class="n">¥1,794</span></td><td>未払金</td><td><span class="hy">-</span></td><td></td><td></td></tr>
      <tr><td><span class="cb"></span></td><td><span class="n">6</span></td><td><svg class="ico" width="18" height="18" viewBox="0 0 18 18"><circle cx="9.5" cy="9" r="7.3" fill="none" stroke="#1a9db0" stroke-width="1.6"/><path d="M6.7 9.1l1.9 1.7 3-3" fill="none" stroke="#1a9db0" stroke-width="1.5" stroke-linecap="round" stroke-linejoin="round"/></svg></td><td class="c"><span class="chk">✓</span></td><td><span class="n">25/01/15</span></td><td><svg class="th" width="60" height="56" viewBox="0 0 60 56" shape-rendering="crispEdges"><rect x="12" y="8" width="1" height="1" fill="#222"/><rect x="14" y="8" width="1" height="1" fill="#222"/><rect x="16" y="8" width="2" height="1" fill="#222"/><rect x="19" y="8" width="1" height="1" fill="#222"/><rect x="12" y="9" width="2" height="1" fill="#222"/><rect x="15" y="9" width="1" height="1" fill="#222"/><rect x="17" y="9" width="3" height="1" fill="#222"/><rect x="21" y="8" width="1" height="1" fill="#555"/><rect x="25" y="8" width="1" height="1" fill="#555"/><rect x="27" y="8" width="1" height="1" fill="#555"/><rect x="29" y="8" width="1" height="1" fill="#555"/><rect x="33" y="8" width="2" height="1" fill="#555"/><rect x="21" y="9" width="1" height="1" fill="#555"/><rect x="24" y="9" width="2" height="1" fill="#555"/><rect x="28" y="9" width="1" height="1" fill="#555"/><rect x="30" y="9" width="1" height="1" fill="#555"/><rect x="35" y="9" width="1" height="1" fill="#555"/><rect x="37" y="9" width="1" height="1" fill="#555"/><rect x="20" y="13" width="2" height="1" fill="#111"/><rect x="19" y="14" width="1" height="1" fill="#111"/><rect x="19" y="15" width="1" height="1" fill="#111"/><rect x="19" y="16" width="2" height="1" fill="#111"/><rect x="29" y="13" width="2" height="1" fill="#222"/><rect x="30" y="14" width="1" height="1" fill="#222"/><rect x="28" y="15" width="1" height="1" fill="#222"/><rect x="28" y="16" width="1" height="1" fill="#222"/><rect x="30" y="16" width="1" height="1" fill="#222"/><rect x="37" y="13" width="3" height="1" fill="#111"/><rect x="37" y="14" width="4" height="1" fill="#111"/><rect x="37" y="15" width="4" height="1" fill="#111"/><rect x="38" y="16" width="3" height="1" fill="#111"/><rect x="14" y="19" width="1" height="1" fill="#333"/><rect x="16" y="19" width="1" height="1" fill="#333"/><rect x="20" y="19" width="1" height="1" fill="#333"/><rect x="23" y="19" width="2" height="1" fill="#333"/><rect x="14" y="20" width="1" height="1" fill="#333"/><rect x="16" y="20" width="1" height="1" fill="#333"/><rect x="20" y="20" width="4" height="1" fill="#333"/><rect x="36" y="19" width="1" height="1" fill="#555"/><rect x="35" y="20" width="1" height="1" fill="#555"/><rect x="43" y="24" width="2" height="1" fill="#333"/><rect x="43" y="25" width="1" height="1" fill="#333"/><rect x="30" y="28" width="1" height="1" fill="#111"/><rect x="31" y="29" width="2" height="1" fill="#111"/><rect x="38" y="28" width="4" height="1" fill="#444"/><rect x="43" y="28" width="1" height="1" fill="#444"/><rect x="39" y="29" width="1" height="1" fill="#444"/><rect x="41" y="29" width="1" height="1" fill="#444"/><rect x="15" y="30" width="1" height="1" fill="#555"/><rect x="20" y="30" width="1" height="1" fill="#555"/><rect x="26" y="30" width="1" height="1" fill="#555"/><rect x="28" y="30" width="1" height="1" fill="#555"/><rect x="16" y="31" width="4" height="1" fill="#555"/><rect x="21" y="31" width="1" height="1" fill="#555"/><rect x="23" y="31" width="1" height="1" fill="#555"/><rect x="26" y="31" width="1" height="1" fill="#555"/><rect x="28" y="31" width="1" height="1" fill="#555"/><rect x="15" y="32" width="2" height="1" fill="#555"/><rect x="18" y="32" width="1" height="1" fill="#555"/><rect x="21" y="32" width="2" height="1" fill="#555"/><rect x="25" y="32" width="1" height="1" fill="#555"/><rect x="31" y="30" width="1" height="1" fill="#111"/><rect x="33" y="30" width="1" height="1" fill="#111"/><rect x="30" y="31" width="1" height="1" fill="#111"/><rect x="32" y="31" width="2" height="1" fill="#111"/><rect x="30" y="32" width="2" height="1" fill="#111"/><rect x="39" y="30" width="2" height="1" fill="#222"/><rect x="39" y="31" width="1" height="1" fill="#222"/><rect x="42" y="31" width="2" height="1" fill="#222"/><rect x="39" y="32" width="1" height="1" fill="#222"/><rect x="43" y="32" width="1" height="1" fill="#222"/><rect x="16" y="33" width="1" height="1" fill="#111"/><rect x="18" y="33" width="4" height="1" fill="#111"/><rect x="25" y="33" width="1" height="1" fill="#111"/><rect x="17" y="34" width="1" height="1" fill="#111"/><rect x="19" y="34" width="2" height="1" fill="#111"/><rect x="22" y="34" width="2" height="1" fill="#111"/><rect x="25" y="34" width="1" height="1" fill="#111"/><rect x="16" y="35" width="3" height="1" fill="#111"/><rect x="20" y="35" width="3" height="1" fill="#111"/><rect x="24" y="35" width="1" height="1" fill="#111"/><rect x="26" y="35" width="1" height="1" fill="#111"/><rect x="16" y="36" width="2" height="1" fill="#111"/><rect x="20" y="36" width="3" height="1" fill="#111"/><rect x="24" y="36" width="1" height="1" fill="#111"/><rect x="26" y="36" width="1" height="1" fill="#111"/><rect x="16" y="37" width="2" height="1" fill="#111"/><rect x="19" y="37" width="1" height="1" fill="#111"/><rect x="21" y="37" width="2" height="1" fill="#111"/><rect x="24" y="37" width="1" height="1" fill="#111"/><rect x="26" y="37" width="1" height="1" fill="#111"/><rect x="16" y="38" width="1" height="1" fill="#111"/><rect x="18" y="38" width="1" height="1" fill="#111"/><rect x="22" y="38" width="2" height="1" fill="#111"/><rect x="25" y="38" width="2" height="1" fill="#111"/><rect x="28" y="35" width="1" height="1" fill="#111"/><rect x="31" y="35" width="3" height="1" fill="#111"/><rect x="28" y="36" width="3" height="1" fill="#111"/><rect x="32" y="36" width="1" height="1" fill="#111"/><rect x="41" y="33" width="1" height="1" fill="#222"/><rect x="44" y="33" width="1" height="1" fill="#222"/><rect x="41" y="34" width="1" height="1" fill="#222"/><rect x="43" y="34" width="2" height="1" fill="#222"/><rect x="41" y="35" width="1" height="1" fill="#222"/><rect x="43" y="35" width="1" height="1" fill="#222"/><rect x="41" y="36" width="2" height="1" fill="#222"/><rect x="42" y="38" width="2" height="1" fill="#333"/><rect x="45" y="38" width="1" height="1" fill="#333"/><rect x="16" y="42" width="1" height="1" fill="#444"/><rect x="14" y="43" width="1" height="1" fill="#444"/><rect x="16" y="43" width="1" height="1" fill="#444"/><rect x="16" y="46" width="1" height="1" fill="#444"/><rect x="19" y="46" width="1" height="1" fill="#444"/><rect x="15" y="47" width="1" height="1" fill="#444"/><rect x="18" y="47" width="2" height="1" fill="#444"/><rect x="24" y="46" width="1" height="1" fill="#444"/><rect x="23" y="47" width="2" height="1" fill="#444"/><rect x="31" y="46" width="1" height="1" fill="#333"/><rect x="33" y="46" width="1" height="1" fill="#333"/><rect x="35" y="46" width="3" height="1" fill="#333"/><rect x="39" y="46" width="1" height="1" fill="#333"/><rect x="41" y="46" width="1" height="1" fill="#333"/><rect x="30" y="47" width="1" height="1" fill="#333"/><rect x="33" y="47" width="2" height="1" fill="#333"/><rect x="36" y="47" width="2" height="1" fill="#333"/><rect x="41" y="47" width="1" height="1" fill="#333"/></svg></td><td>コンビニひまわり 中央店 日用品</td><td>消耗品費</td><td><span class="hy">-</span></td><td>課対仕入10%</td><td class="r"><span class="n">¥1,002</span></td><td>未払金</td><td><span class="hy">-</span></td><td>対象外</td><td></td></tr>
    </tbody>
  </table>
</div>

</div>
</body>
</html>
